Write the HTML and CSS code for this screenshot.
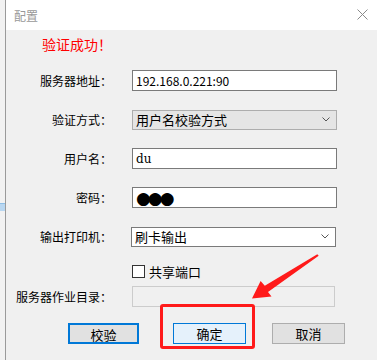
FILE: index.html
```html
<!DOCTYPE html>
<html lang="zh-CN">
  <head>
    <meta charset="UTF-8" />
    <title>配置</title>
    <link rel="stylesheet" href="styles.css">
  </head>
  <body>
    <div class="desk">
      <div class="strip"><div class="strip-item"></div></div>
      <div class="dialog">
        <div class="titlebar">
          <div class="title">配置</div>
          <svg class="close" width="11" height="11" viewBox="0 0 11 11">
            <path d="M0.5 0.5 L10.5 10.5 M10.5 0.5 L0.5 10.5" stroke="#8a8a8a" stroke-width="1" fill="none" />
          </svg>
        </div>
        <div class="content">
          <div class="status">验证成功！</div>

          <div class="row first">
            <label class="lbl">服务器地址：</label>
            <div class="field input">192.168.0.221:90</div>
          </div>

          <div class="row">
            <label class="lbl">验证方式：</label>
            <div class="field combo gray">
              <span>用户名校验方式</span>
              <svg width="8" height="5" viewBox="0 0 8 5"><polyline points="0.5,0.5 4,4 7.5,0.5" fill="none" stroke="#555" stroke-width="1" /></svg>
            </div>
          </div>

          <div class="row">
            <label class="lbl">用户名：</label>
            <div class="field input serif">du</div>
          </div>

          <div class="row">
            <label class="lbl">密码：</label>
            <div class="field input dots">●●●</div>
          </div>

          <div class="row">
            <label class="lbl">输出打印机：</label>
            <div class="field combo shift">
              <span>刷卡输出</span>
              <svg width="8" height="5" viewBox="0 0 8 5"><polyline points="0.5,0.5 4,4 7.5,0.5" fill="none" stroke="#555" stroke-width="1" /></svg>
            </div>
          </div>

          <div class="check-row">
            <span class="checkbox"></span>
            <span>共享端口</span>
          </div>

          <div class="row dir">
            <label class="lbl">服务器作业目录：</label>
            <div class="field input disabled"></div>
          </div>

          <div class="buttons">
            <button class="btn focus">校验</button>
            <button class="btn hover">确定</button>
            <button class="btn">取消</button>
          </div>
        </div>
      </div>
    </div>

    <!-- annotation -->
    <div class="mark"></div>
    <svg class="arrow" width="377" height="360" viewBox="0 0 377 360">
      <polygon points="317.3,254.2 264.8,285.8 260.6,281 252,298.5 271.5,296.5 268,292 318.7,255.8" fill="#ff1a1a" />
    </svg>
  </body>
</html>
```

FILE: styles.css
```css
body {
  margin: 0;
  width: 377px;
  height: 360px;
  overflow: hidden;
  font-family: "Noto Sans CJK SC", "Noto Sans", sans-serif;
  font-size: 12px;
  color: #000;
  background: #f0f0f0;
  position: relative;
}
.desk {
  display: flex;
  height: 100%;
}
.strip {
  width: 5px;
  background: #f2f2f2;
  padding-top: 203px;
}
.strip-item {
  height: 7px;
  background: #b9d7f1;
  border-top: 1px solid #8fbfe6;
}
.dialog {
  flex: 1;
  border-left: 1px solid #9a9a9a;
  display: flex;
  flex-direction: column;
}
.titlebar {
  height: 30px;
  background: #fff;
  display: flex;
  align-items: center;
  justify-content: space-between;
  padding: 0 9px 0 8px;
}
.title {
  color: #999;
  font-size: 12px;
}
.close {
  margin-top: -1px;
}
.content {
  flex: 1;
  background: #f0f0f0;
  padding-top: 6px;
}
.status {
  color: #ff0000;
  font-size: 14px;
  line-height: 16px;
  padding-left: 36px;
}
.row {
  display: flex;
  align-items: center;
  gap: 20px;
  height: 21px;
  margin-top: 18px;
}
.row.dir {
  margin-top: 8px;
}
.lbl {
  width: 106px;
  text-align: right;
  white-space: nowrap;
}
.field {
  box-sizing: border-box;
  width: 205px;
  height: 21px;
  border: 1px solid #7a7a7a;
  background: #fff;
  padding: 0 4px 0 3px;
  display: flex;
  align-items: center;
  white-space: nowrap;
}
.serif {
  font-family: "DejaVu Serif", "Liberation Serif", serif;
  font-size: 12px;
}
.dots {
  font-family: "DejaVu Sans", sans-serif;
  font-size: 17px;
  letter-spacing: -3px;
}
.combo {
  justify-content: space-between;
  font-size: 13px;
  padding-right: 6px;
  height: 20px;
}
.combo.gray {
  background: #e5e5e5;
  border-color: #adadad;
}
.combo.shift {
  margin-left: -1px;
}
.disabled {
  background: #f0f0f0;
  border-color: #cccccc;
  width: 203px;
}
.check-row {
  display: flex;
  align-items: center;
  gap: 4px;
  font-size: 13px;
  height: 13px;
  margin-top: 18px;
  padding-left: 126px;
}
.checkbox {
  box-sizing: border-box;
  width: 13px;
  height: 13px;
  border: 1px solid #333;
  background: #fff;
}
.buttons {
  display: flex;
  margin-top: 16px;
  padding-left: 62px;
}
.btn {
  box-sizing: border-box;
  height: 21px;
  width: 73px;
  font-family: inherit;
  font-size: 13px;
  background: #e1e1e1;
  border: 1px solid #adadad;
  padding: 0;
  color: #000;
}
.btn.focus {
  width: 71px;
  border: 2px solid #0078d7;
  margin-right: 34px;
}
.btn.hover {
  background: #e5f1fb;
  border-color: #0078d7;
  margin-right: 26px;
}
.mark {
  position: absolute;
  left: 160px;
  top: 304px;
  width: 95px;
  height: 45px;
  box-sizing: border-box;
  border: 3px solid #ff1a1a;
  border-radius: 3px;
}
.arrow {
  position: absolute;
  left: 0;
  top: 0;
}
```
